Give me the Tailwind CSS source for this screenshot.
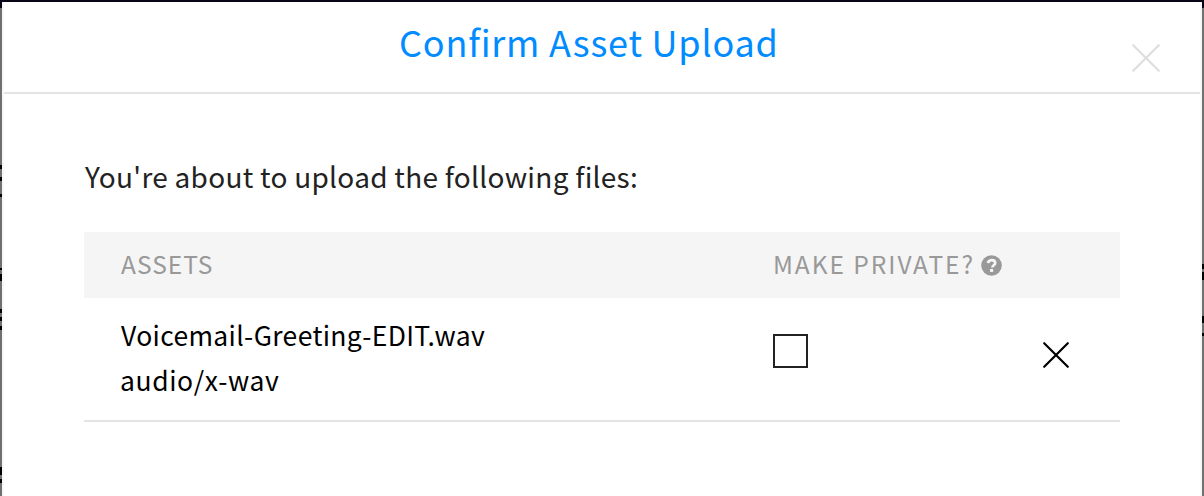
<!DOCTYPE html>
<html lang="en">
<head>
<meta charset="utf-8">
<title>Confirm Asset Upload</title>
<script src="https://cdn.jsdelivr.net/npm/@tailwindcss/browser@4"></script>
</head>
<body class="h-[496px] w-[1204px] overflow-hidden bg-[#070516] font-['Noto_Sans_CJK_SC','Open_Sans',sans-serif]">
<div class="relative h-[496px] px-[2px] pt-[2px]">
  <div class="absolute inset-x-0 top-[8px] bottom-0 bg-[#707070]">
    <i class="absolute left-0 top-[157px] h-[4px] w-[2px] bg-black"></i>
    <i class="absolute left-0 top-[169px] h-[4px] w-[2px] bg-black"></i>
    <i class="absolute left-0 top-[186px] h-[3px] w-[2px] bg-black"></i>
    <i class="absolute left-0 top-[260px] h-[2px] w-[2px] bg-black"></i>
    <i class="absolute left-0 top-[266px] h-[7px] w-[2px] bg-black"></i>
    <i class="absolute left-0 top-[301px] h-[4px] w-[2px] bg-black"></i>
    <i class="absolute left-0 top-[309px] h-[4px] w-[2px] bg-black"></i>
    <i class="absolute left-0 top-[318px] h-[4px] w-[2px] bg-black"></i>
    <i class="absolute left-0 top-[459px] h-[8px] w-[2px] bg-black"></i>
    <i class="absolute left-0 top-[471px] h-[4px] w-[2px] bg-black"></i>
    <i class="absolute right-0 top-[256px] h-[5px] w-[2px] bg-black"></i>
    <i class="absolute right-0 top-[264px] h-[8px] w-[2px] bg-black"></i>
    <i class="absolute right-0 top-[308px] h-[7px] w-[2px] bg-black"></i>
    <i class="absolute right-0 top-[325px] h-[3px] w-[2px] bg-black"></i>
  </div>
  <main class="relative h-full border-x-2 border-[#f8f8f8] bg-white">
    <header class="flex h-[92px] justify-between border-b-2 border-[#e4e4e4]">
      <h1 class="ml-[395px] text-[36px] leading-[79px] tracking-[0.8px] whitespace-nowrap text-[#008cff]">Confirm Asset Upload</h1>
      <button aria-label="Close" class="mt-[41px] mr-[39px] size-[30px]">
        <svg class="size-[30px]" viewBox="0 0 30 30" fill="none" stroke="#dedede" stroke-width="2.2" stroke-linecap="round"><path d="M2.2 2.2 27.8 27.8M27.8 2.2 2.2 27.8"/></svg>
      </button>
    </header>
    <section class="px-[80px] pt-[62px]">
      <p class="h-[76px] pl-px text-[28px] leading-[40px] tracking-[0.27px] whitespace-nowrap text-[#222]">You're about to upload the following files:</p>
      <div class="flex h-[66px] bg-[#f5f5f5] pl-[37px] text-[24.5px] leading-[64px] whitespace-nowrap text-[#999]">
        <span class="w-[652px] tracking-[1px]">ASSETS</span>
        <span class="w-[208px] tracking-[1.95px]">MAKE PRIVATE?</span>
        <svg class="mt-[23px] size-[21px]" viewBox="0 0 21 21"><circle cx="10.5" cy="10.5" r="10.3" fill="#999"/><path d="M6.8 8C7.5 6.2 8.8 5.1 10.7 5.1c2 0 3.5 1.2 3.5 2.9 0 2.2-2.8 2.4-2.8 4.4" fill="none" stroke="#f5f5f5" stroke-width="2.7"/><path d="M9 14h3.2v2.9H9z" fill="#f5f5f5"/></svg>
      </div>
      <div class="flex h-[124px] border-b-2 border-[#e4e4e4] pl-[37px]">
        <div class="w-[652px] pt-[14px] text-[26.5px] leading-[45px] whitespace-nowrap text-black">
          <p class="tracking-[0.35px]">Voicemail-Greeting-EDIT.wav</p>
          <p class="-ml-px tracking-[0.6px]">audio/x-wav</p>
        </div>
        <div class="mt-[36px] h-[34px] w-[35px] border-2 border-[#222] bg-white"></div>
        <svg class="mt-[43px] ml-[234px] size-[28px]" viewBox="0 0 28 28" fill="none" stroke="#000" stroke-width="2.2" stroke-linecap="round"><path d="M2.2 2.2 25.8 25.8M25.8 2.2 2.2 25.8"/></svg>
      </div>
    </section>
  </main>
</div>
</body>
</html>
